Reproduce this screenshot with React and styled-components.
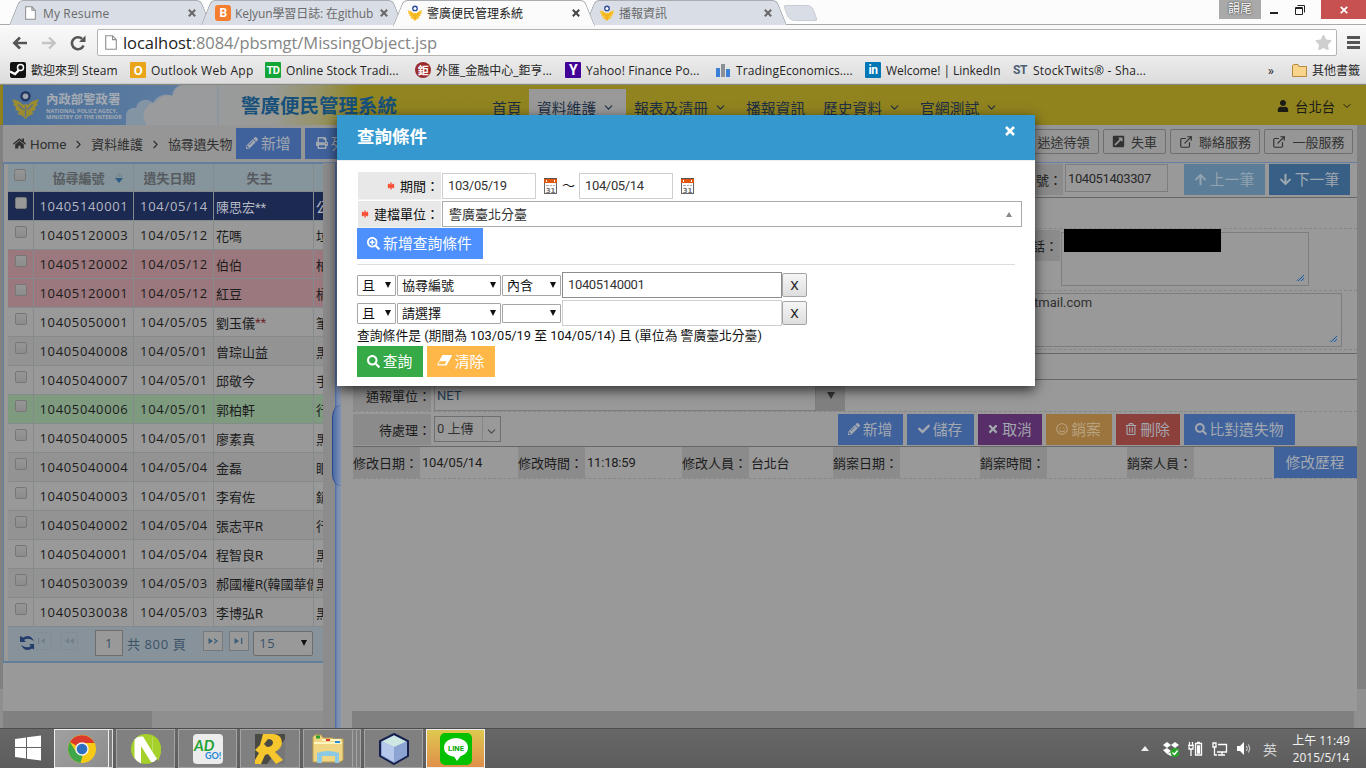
import React from 'react';
import styled, { createGlobalStyle, css } from 'styled-components';
import {
  FaHome, FaPencilAlt, FaPrint, FaCheck, FaTimes, FaRegSmile, FaRegTrashAlt, FaSearch, FaSearchPlus,
  FaArrowUp, FaArrowDown, FaUser, FaExternalLinkSquareAlt, FaStar,
} from 'react-icons/fa';
import { FiExternalLink, FiChevronDown, FiChevronRight } from 'react-icons/fi';

const ui = '"Open Sans", "Noto Sans CJK TC", sans-serif';
const web = 'Roboto, "Noto Sans CJK TC", sans-serif';

const Global = createGlobalStyle`
  * { box-sizing: border-box; }
  body { margin: 0; overflow: hidden; background: #999; }
  svg { display: block; flex: none; }
`;

const Screen = styled.div`
  position: relative;
  width: 1366px;
  height: 768px;
  display: flex;
  flex-direction: column;
  font: 13px ${web};
  color: #1c1c1c;
  white-space: nowrap;
  overflow: hidden;
`;

/* ---------- browser chrome ---------- */
const TabStrip = styled.div`
  height: 25px;
  flex: none;
  display: flex;
  padding-left: 14px;
  background: #fcfcfc;
  border-bottom: 1px solid #a9a9a9;
  font: 12px ${ui};
`;
const TabBox = styled.div`
  position: relative;
  z-index: ${(p) => (p.$active ? 3 : 1)};
  width: 192px;
  height: 25px;
  flex: none;
  display: flex;
  align-items: center;
  padding: 1px 10px 0 ${(p) => p.$pl}px;
  color: ${(p) => (p.$active ? '#222' : '#6a6a6a')};
  &::before, &::after {
    content: '';
    position: absolute;
    z-index: -1;
    top: 0;
    bottom: ${(p) => (p.$active ? -1 : 0)}px;
    background: ${(p) => (p.$active ? '#fbfbfb' : '#d9dee6')};
    border-top: 1px solid #aaadb1;
  }
  &::before { left: 0; right: 40px; transform: skewX(-22deg); border-left: 1px solid #a0a3a7; border-top-left-radius: 5px; }
  &::after { right: 0; width: 80px; transform: skewX(22deg); border-right: 1px solid #a0a3a7; border-top-right-radius: 5px; }
`;
const TabLabel = styled.span`
  flex: 1;
  margin-left: ${(p) => p.$gap || 4}px;
  overflow: hidden;
  letter-spacing: ${(p) => p.$ls || 0}px;
`;
const NewTab = styled.div`
  width: 29px;
  height: 16px;
  margin: 5px 0 0 4px;
  background: #d9dee6;
  border: 1px solid #c9cdd3;
  border-radius: 3px 5px 3px 6px;
  transform: skewX(20deg);
`;
const WindowControls = styled.div`
  margin-left: auto;
  display: flex;
  height: 19px;
  color: #222;
`;
const ImeBadge = styled.span`
  width: 42px;
  height: 19px;
  background: #a9a9a9;
  color: #fff;
  text-align: center;
  line-height: 18px;
  text-shadow: 0 0 2px #333, 0 0 1px #555;
`;
const WinIcon = styled.span`
  width: 26px;
  display: flex;
  align-items: center;
  justify-content: center;
`;
const WinClose = styled(WinIcon)`
  width: 45px;
  margin-left: 8px;
  background: #c75050;
`;

const AddressRow = styled.div`
  height: 33px;
  flex: none;
  display: flex;
  align-items: center;
  background: linear-gradient(#fafafa, #ececec);
  padding: 2px 0 0 12px;
  gap: 13px;
`;
const Omnibox = styled.div`
  width: 1240px;
  height: 27px;
  margin-left: -3px;
  display: flex;
  align-items: center;
  border: 1px solid #b4b4b4;
  border-radius: 2px;
  background: #fff;
  font: 16.5px ${ui};
  letter-spacing: -0.05px;
  color: #858585;
  padding: 0 4px 0 7px;
  b { font-weight: 400; color: #222; margin-left: 6px; }
  svg:last-child { margin-left: auto; }
`;
const Burger = styled.span`
  width: 13px;
  height: 13px;
  margin-left: -3px;
  border: solid #555;
  border-width: 3px 0;
  display: flex;
  align-items: center;
  &::before { content: ''; height: 3px; width: 13px; background: #555; }
`;

const BookmarkBar = styled.div`
  height: 26px;
  flex: none;
  display: flex;
  align-items: center;
  background: linear-gradient(#ebebeb, #dcdcdc);
  border-bottom: 1px solid #c9cacd;
  padding: 0 4px 1px 10px;
  font: 12px ${ui};
  color: #252525;
`;
const Bookmark = styled.span`
  display: flex;
  align-items: center;
  gap: 5px;
  width: ${(p) => p.$w}px;
  letter-spacing: ${(p) => p.$ls || 0}px;
`;
const Fav = styled.i`
  width: 16px;
  height: 16px;
  flex: none;
  display: grid;
  place-items: center;
  font: normal 700 ${(p) => p.$fs || 11}px ${web};
  letter-spacing: -0.5px;
  color: ${(p) => p.$c || '#fff'};
  background: ${(p) => p.$bg || 'transparent'};
  border-radius: ${(p) => p.$r || 1}px;
`;

const Emblem = ({ size = 16, dim }) => (
  <svg width={size} height={size} viewBox="0 0 28 28">
    <path d="M1 9 Q8 10 11 14 L17 14 Q20 10 27 9 L25 13 L26 14 L23 17 L24 19 L20 21 L22 23 L17 25 L14 28 L11 25 L6 23 L8 21 L4 19 L5 17 L2 14 L3 13Z" fill={dim ? '#9b8b33' : '#f9c22b'} />
    <path d="M7 14 L12 19 M21 14 L16 19 M14 16 V26" stroke={dim ? '#58708a' : '#e19b17'} strokeWidth="1.3" />
    <circle cx="14" cy="6" r="5" fill={dim ? '#243763' : '#2b4a9b'} />
    <circle cx="14" cy="6" r="2.7" fill={dim ? '#a0a6ae' : '#fff'} />
  </svg>
);
const PageIcon = ({ w = 11, h = 14 }) => (
  <svg width={w} height={h} viewBox="0 0 12 15">
    <path d="M.7.7H7.5L11.3 4.6V14.3H.7Z M7.5.7V4.6H11.3" fill="#fff" stroke="#8d8d8d" strokeWidth="1.1" />
  </svg>
);
const Cross = ({ s = 8, c = '#666', w = 2 }) => (
  <svg width={s} height={s} viewBox="0 0 8 8"><path d="M.8.8 7.2 7.2M7.2.8.8 7.2" stroke={c} strokeWidth={w} /></svg>
);
const Eraser = () => (
  <svg width="15" height="12" viewBox="0 0 15 12">
    <path d="M5.500 0H14.500Q15.200.400 14.600 1.500L9.500 10.500H1Q0 10.300.500 9Z" fill="#fff" />
    <path d="M2.800 6.200H9.500L7.800 9.300H1.300Z" fill="#ffb848" />
  </svg>
);

const Tab = ({ icon, children, active, ls, gap, pl = 9 }) => (
  <TabBox $active={active} $pl={pl}>{icon}<TabLabel $ls={ls} $gap={gap}>{children}</TabLabel><Cross c={active ? '#444' : '#666'} /></TabBox>
);

/* ---------- application frame ---------- */
const Viewport = styled.div`
  flex: 1;
  min-height: 0;
  display: flex;
  border-top: 1px solid #8b8a80;
`;
const OuterScroll = styled.div`
  width: 3px;
  flex: none;
  display: flex;
  flex-direction: column;
  background: #8f8f8f;
  &::before { content: ''; height: 40px; background: #8f811c; }
  &::after { content: ''; height: 564px; background: #808080; }
`;
const AppFrame = styled.div`
  flex: 1;
  min-width: 0;
  display: flex;
  flex-direction: column;
`;
const AppHeader = styled.div`
  height: 40px;
  flex: none;
  display: flex;
  background: linear-gradient(90deg, #4b6f9b 0, #57789e 110px, #5f7ea0 205px, #999b9c 217px, #999a95 270px, #969368 315px, #918521 355px, #90821d 100%);
`;
const Brand = styled.div`
  width: 122px;
  padding: 5px 0 0 8px;
  display: flex;
  gap: 6px;
  color: #a5abb2;
`;
const BrandText = styled.div`
  padding-top: 1px;
  font: 700 12.4px/17px ${web};
  small {
    display: block;
    margin-top: 1px;
    font: 700 5.5px/5.5px "Open Sans", sans-serif;
    letter-spacing: 0.05px;
  }
`;
const CloudArt = styled.svg`
  width: 92px;
  height: 40px;
`;
const Title = styled.div`
  width: 267px;
  padding-left: 24px;
  font: 700 19.5px/43px ${web};
  color: #17507a;
`;
const Nav = styled.div`
  display: flex;
  padding-top: 4px;
  font-size: 14.8px;
  color: #1e2e44;
`;
const NavItem = styled.div`
  width: ${(p) => p.$w}px;
  padding: 1px 0 0 8px;
  display: flex;
  align-items: center;
  gap: 6px;
  background: ${(p) => (p.$on ? '#999' : 'transparent')};
`;
const UserMenu = styled.div`
  margin: 2px 13px 0 auto;
  display: flex;
  align-items: center;
  gap: 6px;
  font-size: 13.3px;
  color: #1a1a16;
`;
const MainRow = styled.div`
  flex: 1;
  min-height: 0;
  display: flex;
`;
const Main = styled.div`
  width: 1354px;
  display: flex;
  flex-direction: column;
`;
const RightScroll = styled.div`
  width: 9px;
  background: #909090;
  &::before { content: ''; display: block; height: 564px; background: #808080; }
`;
const Toolbar = styled.div`
  height: 38px;
  flex: none;
  display: flex;
  align-items: center;
  padding: 0 4px 0 10px;
  background: #969696;
  border-bottom: 1px solid #687da6;
  color: #303030;
`;
const Crumb = styled.span`
  margin-left: ${(p) => p.$ml}px;
  font-size: ${(p) => p.$fs || 12.9}px;
`;
const CrumbSep = styled(FiChevronRight)`
  width: 13px;
  height: 13px;
  margin: 1px 6px 0;
`;
const Push = styled.span`flex: 1;`;
const Button = styled.button`
  height: 31px;
  width: ${(p) => p.$w}px;
  margin-left: ${(p) => p.$ml || 0}px;
  flex: none;
  display: flex;
  align-items: center;
  justify-content: center;
  gap: 3px;
  padding: 0 1px 2px 0;
  border: 0;
  background: ${(p) => p.$bg || '#3f629c'};
  color: ${(p) => p.$c || '#a3a8b0'};
  font: 14.8px ${web};
  svg { margin-top: 1px; }
`;
const Ghost = styled.button`
  height: 25px;
  width: ${(p) => p.$w}px;
  margin: -4px 0 0 4px;
  flex: none;
  display: flex;
  align-items: center;
  justify-content: center;
  gap: 6px;
  padding: 0;
  border: 1px solid #6f6f6f;
  border-radius: 2px;
  background: #969696;
  color: #323232;
  font: 13px ${web};
`;

/* ---------- list pane ---------- */
const Panes = styled.div`
  flex: 1;
  min-height: 0;
  display: flex;
`;
const ListPane = styled.div`
  width: 320px;
  display: flex;
  flex-direction: column;
  justify-content: space-between;
`;
const GridBox = styled.div`
  border: solid #627f9a;
  border-width: 1px 0 2px 1px;
  padding-left: 4px;
  background: #999;
  font: 13px ${ui};
`;
const rowTone = {
  plain: css`background: #999;`,
  alt: css`background: #939393;`,
  sel: css`background: #1c2951; color: #b4b8c2;`,
  pink: css`background: #9b787d;`,
  green: css`background: #7e9b80;`,
  head: css`background: #86949b; color: #565b60; font-weight: 700; height: 28px;`,
};
const Row = styled.div`
  display: grid;
  grid-template-columns: 26px 100px 80px 100px 9px;
  height: 29px;
  overflow: hidden;
  ${(p) => rowTone[p.$tone]}
`;
const Cell = styled.div`
  border: solid #858a8c;
  border-width: 0 1px 1px 0;
  overflow: hidden;
  display: flex;
  align-items: center;
  justify-content: ${(p) => (p.$left ? 'flex-start' : 'center')};
  padding: 0 ${(p) => p.$pr || 0}px 0 ${(p) => p.$pl || 0}px;
  letter-spacing: ${(p) => p.$ls || 0}px;
  font-family: ${(p) => (p.$left ? web : ui)};
  &:last-child { border-right: 0; }
  em { font-style: normal; color: #6b2a30; }
`;
const Check = styled.span`
  width: 12px;
  height: 12px;
  margin: ${(p) => (p.$head ? -5 : -6)}px 0 0 ${(p) => (p.$head ? -1 : 0)}px;
  border: 1px solid #777;
  border-radius: 2px;
  background: ${(p) => (p.$lit ? '#989898' : 'linear-gradient(#969696, #8c8c8c)')};
`;
const Sort = styled.span`
  margin: 0 0 0 10px;
  &::before, &::after { content: ''; display: block; border: 4px solid transparent; }
  &::before { border-bottom: 5px solid #7c8a92; border-top: 0; margin-bottom: 1px; }
  &::after { border-top: 5px solid #2c5c86; border-bottom: 0; }
`;
const Pager = styled.div`
  height: 34px;
  display: flex;
  align-items: center;
  padding: 0 0 2px 12px;
  background: #87929a;
  color: #3b5369;
  letter-spacing: 0.6px;
`;
const PageBox = styled.span`
  width: 28px;
  height: 26px;
  margin: 0 4px 0 17px;
  border: 1px solid #6e6e6e;
  background: #999;
  text-align: center;
  line-height: 24px;
`;
const PageBtn = styled.span`
  width: ${(p) => (p.$off ? 18 : 20)}px;
  height: ${(p) => (p.$off ? 18 : 20)}px;
  margin: -4px 0 0 ${(p) => p.$ml ?? 6}px;
  display: grid;
  place-items: center;
  border: 1px solid ${(p) => (p.$off ? '#838d94' : '#75797b')};
  background: ${(p) => (p.$off ? 'transparent' : '#999')};
  color: ${(p) => (p.$off ? '#74818b' : '#3b5f7b')};
`;
const PageSize = styled.span`
  width: 60px;
  height: 25px;
  margin-left: 4px;
  padding: 0 5px;
  display: flex;
  align-items: center;
  justify-content: space-between;
  border: 1px solid #6c6c6c;
  border-radius: 2px;
  background: #999;
`;
const Down = styled.i`
  border: ${(p) => p.$s || 4}px solid transparent;
  border-top: ${(p) => (p.$s || 4) + 3}px solid ${(p) => p.$c || '#111'};
  border-bottom: 0;
`;
const HScroll = styled.div`
  height: 17px;
  background: #8f8f8f;
  margin-left: ${(p) => p.$ml || 0}px;
  &::before { content: ''; display: block; height: 17px; width: ${(p) => p.$w}px; background: #808080; }
`;
const VGutter = styled.div`
  width: 12px;
  background: #8c8c8c;
`;
const Splitter = styled.div`
  width: 6px;
  padding-top: 242px;
  background: linear-gradient(90deg, #4a69a8, #7b8eae 40%, #8695b2);
`;
const SplitHandle = styled.div`
  width: 9px;
  height: 81px;
  margin-left: -3px;
  border-radius: 9px 0 0 9px / 12px 0 0 12px;
  background: linear-gradient(90deg, #4b6ba6, #8094b5);
  border-left: 1px solid #27468b;
`;

/* ---------- detail pane ---------- */
const Detail = styled.div`
  width: 1016px;
  padding-left: 12px;
  display: flex;
  flex-direction: column;
  background: #999;
`;
const Line = styled.div`
  display: flex;
  align-items: ${(p) => p.$align || 'center'};
  height: ${(p) => p.$h}px;
  flex: none;
  border-bottom: 1px ${(p) => p.$line || 'dashed'} ${(p) => (p.$line === 'solid' ? '#676767' : '#878787')};
  padding: ${(p) => p.$pt || 0}px 0 0 ${(p) => p.$pl || 0}px;
`;
const Label = styled.span`
  width: ${(p) => p.$w}px;
  height: 31px;
  flex: none;
  padding-right: ${(p) => p.$pr || 0}px;
  display: flex;
  align-items: center;
  justify-content: flex-end;
  background: #8b8b8b;
`;
const Box = styled.span`
  width: ${(p) => p.$w}px;
  height: ${(p) => p.$h}px;
  flex: none;
  margin-left: ${(p) => p.$ml || 2}px;
  padding: ${(p) => p.$p || '0 2px'};
  border: 1px solid #7d7d7d;
  color: ${(p) => p.$c || '#303030'};
  line-height: ${(p) => p.$lh || p.$h - 3}px;
  letter-spacing: ${(p) => p.$ls || 0}px;
`;
const AreaBox = styled(Box)`
  position: relative;
  margin-top: ${(p) => p.$mt || 0}px;
  line-height: 18px;
  &::after {
    content: '';
    position: absolute;
    right: 4px;
    bottom: 4px;
    width: 8px;
    height: 7px;
    clip-path: polygon(100% 0, 100% 100%, 0 100%);
    background: repeating-linear-gradient(135deg, #2f5f90 0 1px, #8294a6 1px 2px);
  }
`;
const Redaction = styled.i`
  position: absolute;
  left: 2px;
  top: -4px;
  width: 157px;
  height: 23px;
  background: #000;
`;
const Combo = styled.span`
  width: 67px;
  height: 26px;
  margin-left: 3px;
  display: flex;
  align-items: center;
  border: 1px solid #6f6f6f;
  color: #333;
  padding-left: 2px;
`;
const ComboText = styled.span`
  flex: 1;
  line-height: 24px;
  border-right: 1px solid #868686;
`;
const ComboArrow = styled(FiChevronDown)`
  width: 13px;
  height: 13px;
  margin: 4px 2px 0;
  color: #4a4a4a;
`;
const DropBtn = styled.span`
  width: 29px;
  height: 31px;
  display: grid;
  place-items: center;
  background: linear-gradient(#8c8c8c, #7e7e7e);
`;
const Value = styled.span`
  width: ${(p) => p.$w}px;
  padding-left: 2px;
  letter-spacing: -0.2px;
`;

/* ---------- query dialog ---------- */
const Dialog = styled.div`
  position: absolute;
  left: 337px;
  top: 115px;
  width: 698px;
  height: 271px;
  background: #fff;
  box-shadow: 0 4px 12px rgba(0, 0, 0, 0.7);
  color: #111;
`;
const DialogHead = styled.div`
  height: 45px;
  padding: 0 20px;
  display: flex;
  justify-content: space-between;
  background: #3599cf;
  color: #fff;
  font: 700 17.5px/45px ${web};
  svg { margin-top: 11px; }
`;
const DialogBody = styled.div`
  border-top: 1px solid #e9eef2;
  padding: 11px 13px 0 20px;
`;
const Field = styled.div`
  display: flex;
  align-items: center;
  height: ${(p) => p.$h}px;
`;
const FieldLabel = styled.span`
  width: 83px;
  height: ${(p) => p.$h}px;
  margin: 0 1px;
  display: flex;
  align-items: center;
  justify-content: flex-end;
  padding-right: 2px;
  background: #e8e8e8;
  border-bottom: 1px solid #f2f2f2;
`;
const Asterisk = () => (
  <svg width="13" height="8" viewBox="0 0 13 8"><path d="M4 .5V7.500M1 2.200 7 5.800M7 2.200 1 5.800M.800 4H7.200" stroke="#fb4c32" strokeWidth="1.400" /></svg>
);
const Input = styled.span`
  width: ${(p) => p.$w}px;
  height: 26px;
  flex: none;
  padding: 0 5px;
  border: 1px solid ${(p) => p.$b || '#cfcfcf'};
  line-height: 23px;
  color: #333;
  letter-spacing: -0.35px;
`;
const UnitSelect = styled(Input)`
  display: flex;
  justify-content: space-between;
  align-items: center;
  padding: 0 9px 0 6px;
  letter-spacing: 0;
  &::after {
    content: '';
    border: 3px solid transparent;
    border-bottom: 5px solid #888;
    border-top: 0;
  }
`;
const Gap = styled.span`
  width: ${(p) => p.$w}px;
  padding-bottom: 3px;
  text-align: center;
`;
const Rule = styled.div`
  height: 1px;
  margin: 5px 7px 6px 0;
  background: #ddd;
`;
const Select = styled.span`
  width: ${(p) => p.$w}px;
  height: ${(p) => p.$h || 21}px;
  margin-right: 1px;
  padding: 0 4px 1px;
  display: flex;
  align-items: center;
  justify-content: space-between;
  border: 1px solid #a6a6a6;
  border-radius: 1px;
`;
const RemoveBtn = styled.button`
  width: 25px;
  height: 24px;
  padding: 0;
  border: 1px solid #a4a4a4;
  border-radius: 2px;
  background: linear-gradient(#f6f6f6, #dedede);
  font: 13.5px ${web};
  color: #222;
`;
const Summary = styled.div`
  height: 19px;
  font-size: 12.8px;
  line-height: 18px;
  white-space: pre;
`;
const Actions = styled.div`display: flex; gap: 4px;`;

const Calendar = () => (
  <svg width="15" height="17" viewBox="0 0 15 17" shapeRendering="crispEdges">
    <path d="M1.500 1.500H13.500V15.500H1.500Z" fill="#fff" stroke="#666" />
    <path d="M1 1H14V5H1Z" fill="#e2560f" />
    <path d="M1 0.500H14" stroke="#555" />
    <path d="M3 2h1v2H3zM11 2h1v2h-1z" fill="#fff" />
    <path d="M3 7h3M7 7h2M10 7h2" stroke="#aaa" />
    <text x="7.500" y="15" fontSize="7" fontWeight="700" fontFamily="DejaVu Sans" textAnchor="middle" fill="#777">31</text>
  </svg>
);

/* ---------- taskbar ---------- */
const Taskbar = styled.div`
  height: 40px;
  flex: none;
  display: flex;
  padding-left: 14px;
  background: linear-gradient(#676767, #5d5d5d);
  border-top: 1px solid #4c4c4c;
  color: #f2f2f2;
  font: 12px ${ui};
`;
const StartLogo = styled.svg`
  width: 28px;
  height: 26px;
  margin-top: 6px;
`;
const Task = styled.div`
  width: ${(p) => p.$w || 59}px;
  height: 39px;
  margin-left: ${(p) => p.$ml || 3}px;
  display: grid;
  place-items: center;
  border: 1px solid ${(p) => (p.$on ? '#eee' : '#a3a3a3')};
  background: ${(p) => p.$bg || (p.$on ? 'linear-gradient(135deg, #a0a0a0, #8d8d8d)' : '#808080')};
`;
const Stack = styled.div`
  width: 4px;
  height: 39px;
  border: 1px solid ${(p) => (p.$on ? '#ddd' : '#a3a3a3')};
  border-left: 0;
  background: #808080;
`;
const Tray = styled.div`
  margin-left: auto;
  display: flex;
  align-items: center;
  padding-right: 15px;
`;
const TrayIcons = styled.div`
  display: flex;
  align-items: center;
  gap: 9px;
  svg:first-child { margin-right: 5px; }
`;
const Clock = styled.div`
  margin-left: 14px;
  width: 60px;
  text-align: center;
  line-height: 17px;
  padding-top: 1px;
`;
const TrayText = styled.span`
  margin-left: 12px;
  font-size: 14px;
  color: #d5d5d5;
`;

const rows = [
  ['10405140001', '104/05/14', '陳思宏**', '公', 'sel'],
  ['10405120003', '104/05/12', '花嗎', '垃', 'plain'],
  ['10405120002', '104/05/12', '伯伯', '柏', 'pink'],
  ['10405120001', '104/05/12', '紅豆', '橘', 'pink'],
  ['10405050001', '104/05/05', <>劉玉儀<em>**</em></>, '筆', 'plain'],
  ['10405040008', '104/05/01', '曾琮山益', '黑', 'alt'],
  ['10405040007', '104/05/01', '邱敬今', '手', 'plain'],
  ['10405040006', '104/05/01', '郭柏軒', '行', 'green'],
  ['10405040005', '104/05/01', '廖素真', '黑', 'plain'],
  ['10405040004', '104/05/04', '金磊', '眼', 'alt'],
  ['10405040003', '104/05/01', '李宥佐', '銷', 'plain'],
  ['10405040002', '104/05/04', '張志平R', '行', 'alt'],
  ['10405040001', '104/05/04', '程智良R', '黑', 'plain'],
  ['10405030039', '104/05/03', '郝國權R(韓國華僑)', '黑', 'alt'],
  ['10405030038', '104/05/03', '李博弘R', '黑', 'plain'],
];

const BrowserChrome = () => (
  <>
    <TabStrip>
      <Tab icon={<PageIcon />} gap={7} pl={11} ls={0.15}>My Resume</Tab>
      <Tab icon={<Fav $bg="#f57d2e" $r={3} $fs={12}>B</Fav>} ls={-0.1}>KeJyun學習日誌: 在github</Tab>
      <Tab icon={<Emblem />} active>警廣便民管理系統</Tab>
      <Tab icon={<Emblem />}>播報資訊</Tab>
      <NewTab />
      <WindowControls>
        <ImeBadge>韻尾</ImeBadge>
        <WinIcon><svg width="8" height="14"><path d="M0 10H8" stroke="#222" strokeWidth="2" /></svg></WinIcon>
        <WinIcon><svg width="10" height="10" viewBox="0 0 10 10" fill="none" stroke="#222"><path d="M.5 2.5H7.5V9.5H.5ZM.5 3.5H7.5M2.5.5H9.5V7.5" /></svg></WinIcon>
        <WinClose><Cross c="#fff" w={1.8} /></WinClose>
      </WindowControls>
    </TabStrip>
    <AddressRow>
      <svg width="16" height="14" viewBox="0 0 16 14" fill="none" stroke="#555" strokeWidth="2.6"><path d="M15 7H3M8 1.5 2.3 7 8 12.5" /></svg>
      <svg width="16" height="14" viewBox="0 0 16 14" fill="none" stroke="#c4c4c4" strokeWidth="2.4"><path d="M1 7H13M8 1.5 13.7 7 8 12.5" /></svg>
      <svg width="17" height="16" viewBox="0 0 17 16"><path d="M13.5 10.5A6 6 0 1 1 12 3.8" fill="none" stroke="#555" strokeWidth="2.6" /><path d="M15.5.5V7H9Z" fill="#555" /></svg>
      <Omnibox><PageIcon w={12} h={15} /><b>localhost</b>:8084/pbsmgt/MissingObject.jsp<FaStar size={17} color="#cfcfcf" /></Omnibox>
      <Burger />
    </AddressRow>
    <BookmarkBar>
      <Bookmark $w={120}>
        <svg width="16" height="16"><rect width="16" height="16" rx="2" fill="#111" /><circle cx="10.5" cy="5.5" r="3" fill="none" stroke="#fff" strokeWidth="1.5" /><path d="M0 9.5 5 12 9 8" fill="none" stroke="#fff" strokeWidth="2.4" /></svg>
        歡迎來到 Steam
      </Bookmark>
      <Bookmark $w={135} $ls={0.28}><Fav $bg="#e9a517" $fs={13}>O</Fav>Outlook Web App</Bookmark>
      <Bookmark $w={150} $ls={0.07}><Fav $bg="#12a639" $fs={11}>TD</Fav>Online Stock Tradi...</Bookmark>
      <Bookmark $w={150}><Fav $bg="#9c2a2c" $r={8} $fs={11}>鉅</Fav>外匯_金融中心_鉅亨...</Bookmark>
      <Bookmark $w={150} $ls={0.1}><Fav $bg="#430297" $fs={14}>Y</Fav>Yahoo! Finance Po...</Bookmark>
      <Bookmark $w={150} $ls={0.1}>
        <svg width="16" height="16"><path d="M1 6h4v9H1zM11 7h4v8h-4z" fill="#3b80d8" /><path d="M6 2h4v13H6z" fill="#8b8f96" /></svg>
        TradingEconomics....
      </Bookmark>
      <Bookmark $w={147} $ls={-0.05}><Fav $bg="#0177b5" $fs={12}>in</Fav>Welcome! | LinkedIn</Bookmark>
      <Bookmark $w={150} $ls={0.2}><Fav $c="#4d5f75" $fs={12}>ST</Fav>StockTwits® - Sha...</Bookmark>
      <Push />
      <Bookmark $w={24}>»</Bookmark>
      <Bookmark $w={70}>
        <svg width="15" height="13" viewBox="0 0 15 13"><path d="M.5 12.5V1.5L2 .5H6L7 2.5H14.5V12.5Z" fill="#f9d58b" stroke="#b98a3c" /></svg>
        其他書籤
      </Bookmark>
    </BookmarkBar>
  </>
);

const pagerGlyphs = {
  first: 'M0 0H1.300V6H0ZM7 0V6L2.500 3Z',
  prev: 'M5 0V6L.500 3ZM10 0V6L5.500 3Z',
  next: 'M.500 0V6L5 3ZM6 0 10 3 6 6 6 4.500 8 3 6 1.500Z',
  last: 'M.500 0V6L5 3ZM7 0H8.300V6H7Z',
};
const PagerGlyph = ({ name }) => (
  <svg width="11" height="7" viewBox="0 0 11 7" fill="currentColor"><path d={pagerGlyphs[name]} /></svg>
);

const ListTable = () => (
  <GridBox>
    <Row $tone="head">
      <Cell><Check $head /></Cell>
      <Cell $pl={8}>協尋編號<Sort /></Cell>
      <Cell $pr={8}>遺失日期</Cell>
      <Cell $pr={8}>失主</Cell>
      <Cell />
    </Row>
    {rows.map(([id, date, owner, item, tone]) => (
      <Row key={id} $tone={tone}>
        <Cell><Check $lit={tone === 'sel'} /></Cell>
        <Cell $ls={0.65} $pl={1}>{id}</Cell>
        <Cell $ls={0.7} $pl={1}>{date}</Cell>
        <Cell $left $pl={2}>{owner}</Cell>
        <Cell $left $pl={2}>{item}</Cell>
      </Row>
    ))}
    <Pager>
      <svg width="15" height="16" viewBox="0 0 15 16" fill="#223c6c"><path d="M0 1V7H6L4 5Q8 2 14 6 10-2 3 2.5ZM15 15V9H9L11 11Q7 14 1 10 5 18 12 13.500Z" /></svg>
      <PageBtn $off $ml={-1}><PagerGlyph name="first" /></PageBtn>
      <PageBtn $off $ml={8}><PagerGlyph name="prev" /></PageBtn>
      <PageBox>1</PageBox>共 800 頁
      <PageBtn $ml={17}><PagerGlyph name="next" /></PageBtn>
      <PageBtn><PagerGlyph name="last" /></PageBtn>
      <PageSize>15<Down $s={3.5} /></PageSize>
    </Pager>
  </GridBox>
);

const DetailPane = () => (
  <Detail>
    <Line $h={35} $line="solid" $pl={660} $pt={1} $align="flex-start">
      <Label $w={50} $pr={1}>號：</Label>
      <Box $w={103} $h={28} $lh={27} $ls={-0.4} $c="#282828">104051403307</Box>
      <Button $w={81} $ml={16} $bg="#5b7d98" $c="#93a3b0"><FaArrowUp size={13} />上一筆</Button>
      <Button $w={81} $ml={4} $bg="#385f85" $c="#9fa8b0"><FaArrowDown size={13} />下一筆</Button>
    </Line>
    <Line $h={31} />
    <Line $h={62} $pl={647} $pt={1} $align="flex-start">
      <Label $w={60} $pr={2}>話：</Label>
      <AreaBox $w={248} $h={54} $ml={1} $mt={2}><Redaction /></AreaBox>
    </Line>
    <Line $h={59} $pl={582}>
      <AreaBox $w={405} $h={54} $p="0 0 0 96px">tmail.com</AreaBox>
    </Line>
    <Line $h={4} $line="solid" />
    <Line $h={26} $line="solid" />
    <Line $h={32}>
      <Label $w={78}>通報單位：</Label>
      <Box $w={382} $h={30} $ml={3} $c="#243d52">NET</Box>
      <DropBtn><Down $c="#333" /></DropBtn>
    </Line>
    <Line $h={35} $line="solid">
      <Label $w={78}>待處理：</Label>
      <Combo><ComboText>0 上傳</ComboText><ComboArrow /></Combo>
      <Button $w={65} $ml={337}><FaPencilAlt size={12} />新增</Button>
      <Button $w={67} $ml={4}><FaCheck size={12} />儲存</Button>
      <Button $w={64} $ml={4} $bg="#582e68"><FaTimes size={12} />取消</Button>
      <Button $w={66} $ml={4} $bg="#9b753d" $c="#b8a17d"><FaRegSmile size={12} />銷案</Button>
      <Button $w={64} $ml={4} $bg="#8c403b"><FaRegTrashAlt size={12} />刪除</Button>
      <Button $w={111} $ml={4}><FaSearch size={12} />比對遺失物</Button>
    </Line>
    <Line $h={32}>
      <Label $w={67} $pr={2}>修改日期：</Label><Value $w={98}>104/05/14</Value>
      <Label $w={67} $pr={2}>修改時間：</Label><Value $w={97}>11:18:59</Value>
      <Label $w={67} $pr={2}>修改人員：</Label><Value $w={84}>台北台</Value>
      <Label $w={67} $pr={2}>銷案日期：</Label><Value $w={80} />
      <Label $w={67} $pr={2}>銷案時間：</Label><Value $w={80} />
      <Label $w={67} $pr={2}>銷案人員：</Label><Value $w={80} />
      <Button $w={83}>修改歷程</Button>
    </Line>
    <Push />
    <HScroll $w={1002} $ml={-1} />
  </Detail>
);

const QueryDialog = () => (
  <Dialog>
    <DialogHead>查詢條件<Cross s={10} c="#fff" w={2} /></DialogHead>
    <DialogBody>
      <Field $h={28}>
        <FieldLabel $h={28}><Asterisk />期間：</FieldLabel>
        <Input $w={94}>103/05/19</Input>
        <Gap $w={7} /><Calendar /><Gap $w={21}>～</Gap>
        <Input $w={94}>104/05/14</Input>
        <Gap $w={7} /><Calendar />
      </Field>
      <Field $h={28}>
        <FieldLabel $h={27}><Asterisk />建檔單位：</FieldLabel>
        <UnitSelect $w={580} $b="#aaa">警廣臺北分臺</UnitSelect>
      </Field>
      <Button $w={126} $bg="#4d90fe" $c="#fff"><FaSearchPlus size={13} />新增查詢條件</Button>
      <Rule />
      <Field $h={28}>
        <Select $w={39}>且<Down $s={3.5} /></Select>
        <Select $w={104}>協尋編號<Down $s={3.5} /></Select>
        <Select $w={59}>內含<Down $s={3.5} /></Select>
        <Input $w={220} $b="#8c8c8c">10405140001</Input>
        <RemoveBtn>X</RemoveBtn>
      </Field>
      <Field $h={28}>
        <Select $w={39}>且<Down $s={3.5} /></Select>
        <Select $w={104}>請選擇<Down $s={3.5} /></Select>
        <Select $w={59} $h={19}><span /><Down $s={3.5} /></Select>
        <Input $w={220} />
        <RemoveBtn>X</RemoveBtn>
      </Field>
      <Summary>查詢條件是 (期間為 103/05/19 至 104/05/14) 且 (單位為 警廣臺北分臺)</Summary>
      <Actions>
        <Button $w={66} $bg="#35aa47" $c="#fff"><FaSearch size={13} />查詢</Button>
        <Button $w={68} $bg="#ffb848" $c="#fff"><Eraser />清除</Button>
      </Actions>
    </DialogBody>
  </Dialog>
);

const Desktop = () => (
  <Taskbar>
    <StartLogo viewBox="0 0 28 26" fill="#fff"><path d="M1 4 12 2.500V12H1ZM13 2.300 27 .500V12H13ZM1 13H12V23.500L1 22ZM13 13H27V25.500L13 23.700Z" /></StartLogo>
    <Task $w={55} $ml={12} $on>
      <svg width="30" height="30" viewBox="0 0 30 30"><circle cx="15" cy="15" r="14" fill="#f7cb15" /><path d="M15 15 2.900 8A14 14 0 0 1 27.500 9H15Z" fill="#dc3a2c" /><path d="M2.900 8 9.500 18.500 16 20 13.500 28.900A14 14 0 0 1 2.900 8Z" fill="#3fa64a" /><circle cx="15" cy="15" r="6.700" fill="#f4f4f4" /><circle cx="15" cy="15" r="5.300" fill="#2f6fc0" /></svg>
    </Task>
    <Stack $on />
    <Task>
      <svg width="30" height="30"><circle cx="15" cy="15" r="15" fill="#a6d02a" /><path d="M3.500 24V5.500Q6 2.500 9.500 2.500H12L21.500 18V3L27 7V24L22.500 28H20L10 12V29.500Q6 28 3.500 24Z" fill="#fff" /><path d="M21.500 1V18L27.500 27 31 15 27 5Z" fill="#a6d02a" /></svg>
    </Task>
    <Task>
      <svg width="30" height="30"><rect width="30" height="30" rx="4" fill="#ececec" /><text x="1" y="17" fontSize="15" fontStyle="italic" fontWeight="700" fontFamily="Lato" fill="#1fa233">AD</text><text x="12" y="25" fontSize="9" fontWeight="700" fontFamily="Lato" fill="#1c87d8">GO!</text></svg>
    </Task>
    <Task $w={60}>
      <svg width="30" height="30"><rect width="30" height="30" fill="#4a4a45" /><path d="M30 5V30H12Z" fill="#777" /><path fillRule="evenodd" d="M8 0H19Q27 1 27 9 26 15 20 18L28 26 21 30 13 20 10 21 6 30H0V26L4 19 0 16 5 11ZM13 5 9 10 12 13Q17 13 18 9 18 5 13 5Z" fill="#f5c72c" /></svg>
    </Task>
    <Task $w={50}>
      <svg width="32" height="30" viewBox="0 0 32 30"><path d="M1 28V3L3 1H9L11 4H20L22 5H31V26L28 28Z" fill="#f0d682" stroke="#c1a04d" /><path d="M2 9H30M10 6H29" stroke="#fff5c2" strokeWidth="2" /><path d="M4 3h4" stroke="#2a9f2a" strokeWidth="3" /><path d="M14 6h4" stroke="#d33" strokeWidth="2" /><path d="M23 8h5" stroke="#2b8cd6" strokeWidth="2" /><path d="M5 29V19Q16 15 27 19V29H23V22H10V29Z" fill="#8cc9e4" /></svg>
    </Task>
    <Stack /><Stack />
    <Task>
      <svg width="32" height="32" viewBox="0 0 32 32" stroke="#17204c" strokeWidth="2"><path d="M16 1 30 8V23L16 31 2 23V8Z" fill="#8ba4d3" /><path d="M16 2.500 28 8.500 16 14 4 8.500Z" fill="#cfe7e2" stroke="none" /><path d="M16 14V29L4 22V8.500Z" fill="#b7c9ea" stroke="none" /></svg>
    </Task>
    <Task $bg="linear-gradient(#dfc84f, #e08f4a)" $on>
      <svg width="32" height="32"><rect width="32" height="32" rx="5" fill="#04c100" /><ellipse cx="16" cy="14.500" rx="12" ry="9.500" fill="#fff" /><path d="M13 22 17 28 22 21Z" fill="#fff" /><text x="16" y="17.500" textAnchor="middle" fontSize="7.500" fontWeight="700" fontFamily="Roboto" fill="#04a800">LINE</text></svg>
    </Task>
    <Tray>
      <TrayIcons>
        <svg width="8" height="5"><path d="M0 5 4 0 8 5Z" fill="#eee" /></svg>
        <svg width="16" height="16"><path d="M4 1 8 4 4 7 0 4ZM12 1 16 4 12 7 8 4ZM4 7 8 10 4 13 0 9ZM12 7 16 9 12 13 8 10ZM4 13 8 11 12 13 8 15Z" fill="#fff" /><circle cx="12" cy="11.500" r="4.500" fill="#27a327" /><path d="M9.500 11.500 11.500 13.500 14.500 9.500" stroke="#fff" strokeWidth="1.400" fill="none" /></svg>
        <svg width="15" height="15" fill="none" stroke="#fff" strokeWidth="1.300"><path d="M1.500 1V4M4.500 1V4M0 4.500H6M1 5.500V8H5V5.500M3 8V15M7.500 2.500H13.500V14H7.500ZM9 1.500H12" /><path d="M9.500 5H11.500V12H9.500Z" fill="#fff" /></svg>
        <svg width="16" height="14" fill="none" stroke="#fff" strokeWidth="1.300"><path d="M6 2.500H14.500V10H5M10 10V13M6 13H13M1 1H4V5H1ZM2.500 5V13H5" /></svg>
        <svg width="14" height="15"><path d="M0 5H3L7 1V14L3 10H0Z" fill="#fff" /><path d="M9.500 5Q11 7.500 9.500 10M11.500 3.500Q14 7.500 11.500 11.500" fill="none" stroke="#ddd" /></svg>
      </TrayIcons>
      <TrayText>英</TrayText>
      <Clock>上午 11:49<br />2015/5/14</Clock>
    </Tray>
  </Taskbar>
);

export default function App() {
  return (
    <Screen>
      <Global />
      <BrowserChrome />
      <Viewport>
        <OuterScroll />
        <AppFrame>
          <AppHeader>
            <Brand>
              <Emblem size={29} dim />
              <BrandText>內政部警政署<small>NATIONAL POLICE AGECY,<br />MINISTRY OF THE INTERIOR</small></BrandText>
            </Brand>
            <CloudArt viewBox="0 0 92 40">
              <path d="M1 40V32A8 8 0 0 1 11 23 10 10 0 0 1 28 18 14 14 0 0 1 47 11 12 12 0 0 1 63 0H92V40Z" fill="#8394a5" />
              <path d="M22 40A14 14 0 0 1 31 17 14 14 0 0 1 48 11 12 12 0 0 1 64 1V0H93V40Z" fill="#999b9c" />
            </CloudArt>
            <Title>警廣便民管理系統</Title>
            <Nav>
              <NavItem $w={45}>首頁</NavItem>
              <NavItem $w={97} $on>資料維護<FiChevronDown size={13} /></NavItem>
              <NavItem $w={112}>報表及清冊<FiChevronDown size={13} /></NavItem>
              <NavItem $w={77}>播報資訊</NavItem>
              <NavItem $w={97}>歷史資料<FiChevronDown size={13} /></NavItem>
              <NavItem $w={97}>官網測試<FiChevronDown size={13} /></NavItem>
            </Nav>
            <UserMenu><FaUser size={12} />台北台<FiChevronDown size={12} /></UserMenu>
          </AppHeader>
          <MainRow>
            <Main>
              <Toolbar>
                <FaHome size={13} />
                <Crumb $ml={4} $fs={13.5}>Home</Crumb>
                <CrumbSep />
                <Crumb>資料維護</Crumb>
                <CrumbSep />
                <Crumb>協尋遺失物</Crumb>
                <Button $w={65} $ml={4}><FaPencilAlt size={12} />新增</Button>
                <Button $w={67} $ml={4}><FaPrint size={12} />列印</Button>
                <Push />
                <Ghost $w={90}><FaExternalLinkSquareAlt size={13} />迷途待領</Ghost>
                <Ghost $w={63}><FaExternalLinkSquareAlt size={13} />失車</Ghost>
                <Ghost $w={90}><FiExternalLink size={14} />聯絡服務</Ghost>
                <Ghost $w={89}><FiExternalLink size={14} />一般服務</Ghost>
              </Toolbar>
              <Panes>
                <ListPane><ListTable /><HScroll $w={149} /></ListPane>
                <VGutter />
                <Splitter><SplitHandle /></Splitter>
                <DetailPane />
              </Panes>
            </Main>
            <RightScroll />
          </MainRow>
        </AppFrame>
      </Viewport>
      <Desktop />
      <QueryDialog />
    </Screen>
  );
}
